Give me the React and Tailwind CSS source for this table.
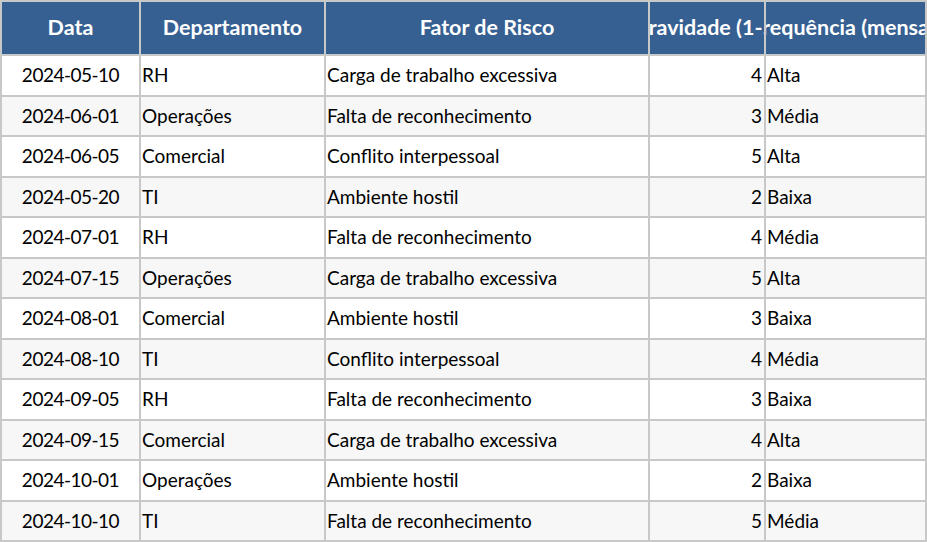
import React from "react";

const rows = [
  ["2024-05-10", "RH", "Carga de trabalho excessiva", 4, "Alta"],
  ["2024-06-01", "Operações", "Falta de reconhecimento", 3, "Média"],
  ["2024-06-05", "Comercial", "Conflito interpessoal", 5, "Alta"],
  ["2024-05-20", "TI", "Ambiente hostil", 2, "Baixa"],
  ["2024-07-01", "RH", "Falta de reconhecimento", 4, "Média"],
  ["2024-07-15", "Operações", "Carga de trabalho excessiva", 5, "Alta"],
  ["2024-08-01", "Comercial", "Ambiente hostil", 3, "Baixa"],
  ["2024-08-10", "TI", "Conflito interpessoal", 4, "Média"],
  ["2024-09-05", "RH", "Falta de reconhecimento", 3, "Baixa"],
  ["2024-09-15", "Comercial", "Carga de trabalho excessiva", 4, "Alta"],
  ["2024-10-01", "Operações", "Ambiente hostil", 2, "Baixa"],
  ["2024-10-10", "TI", "Falta de reconhecimento", 5, "Média"],
];

const headers = ["Data", "Departamento", "Fator de Risco", "Gravidade (1-5)", "Frequência (mensal)"];

export default function App() {
  return (
    <div className="w-[927px] h-[542px] overflow-hidden bg-white" style={{ fontFamily: "Lato, 'Noto Sans', sans-serif" }}>
      <div className="grid grid-cols-[139px_185px_324px_116px_161px] border-t-2 border-l-2 border-[#c8c8c8]">
        {headers.map((h) => (
          <div
            key={h}
            className="h-[52px] box-content bg-[#366092] border-r-2 border-b-2 border-[#c8c8c8] flex items-center justify-center overflow-hidden whitespace-nowrap text-white font-bold text-[21.5px]"
          >
            <span className="shrink-0 -mt-[2px]">{h}</span>
          </div>
        ))}
        {rows.map((r, i) => {
          const bg = i % 2 === 0 ? "bg-white" : "bg-[#f7f7f7]";
          const cell = `h-[38.5px] box-content ${bg} border-r-2 border-b-2 border-[#c8c8c8] flex items-center overflow-hidden whitespace-nowrap text-[19px] text-black`;
          return (
            <React.Fragment key={i}>
              <div className={`${cell} justify-center tracking-[-0.5px]`}>{r[0]}</div>
              <div className={`${cell} pl-[1px]`}>{r[1]}</div>
              <div className={`${cell} pl-[1px]`}>{r[2]}</div>
              <div className={`${cell} justify-end pr-[2px]`}>{r[3]}</div>
              <div className={`${cell} pl-[1px]`}>{r[4]}</div>
            </React.Fragment>
          );
        })}
      </div>
    </div>
  );
}
